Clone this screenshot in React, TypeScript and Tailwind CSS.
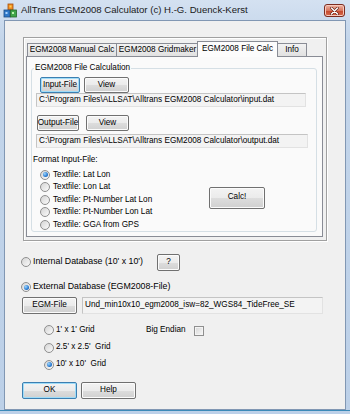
import React from "react";

const btnBase =
  "flex items-center justify-center whitespace-nowrap rounded-[2px] border bg-[linear-gradient(#f3f3f3_0%,#ebebeb_50%,#dddddd_51%,#d0d0d0_100%)] text-[8.2px] leading-none";
const btnNormal = "border-[#707070] shadow-[inset_0_0_0_1px_#fbfbfb]";
const btnFocus = "border-[#3c7fb1] shadow-[inset_0_0_0_1px_#9fdcf8]";

function Btn({
  label,
  className,
  focus,
}: {
  label: string;
  className: string;
  focus?: boolean;
}) {
  return (
    <div className={`${btnBase} ${focus ? btnFocus : btnNormal} ${className}`}>
      {label}
    </div>
  );
}

function Radio({ checked }: { checked?: boolean }) {
  return (
    <div className="flex h-[10px] w-[10px] shrink-0 items-center justify-center rounded-full border border-[#8f8f8f] bg-[linear-gradient(135deg,#d4d4d4,#fbfbfb)]">
      {checked && (
        <div className="h-[5px] w-[5px] rounded-full bg-[radial-gradient(circle_at_35%_35%,#9fd8ff,#2a7ad0_60%,#114f9c)]" />
      )}
    </div>
  );
}

function RadioRow({
  label,
  checked,
  className,
}: {
  label: string;
  checked?: boolean;
  className: string;
}) {
  return (
    <div className={`flex items-center ${className}`}>
      <Radio checked={checked} />
      <span className="ml-[3px] whitespace-nowrap">{label}</span>
    </div>
  );
}

function Field({ text, className }: { text: string; className: string }) {
  return (
    <div
      className={`flex items-center overflow-hidden whitespace-nowrap border border-[#c4c4c4] border-b-[#e2e2e2] border-r-[#e2e2e2] bg-[#f3f3f3] pl-[2px] ${className}`}
    >
      {text}
    </div>
  );
}

function AppIcon() {
  return (
    <svg width="15" height="15" viewBox="0 0 15 15">
      <rect x="5" y="1" width="5" height="6" fill="#f08a24" stroke="#a4520c" strokeWidth="0.8" />
      <rect x="6.5" y="2.5" width="2" height="2" fill="#ffd24a" />
      <rect x="1" y="7" width="6" height="7" fill="#2f78c8" stroke="#1c4b84" strokeWidth="0.8" />
      <rect x="7.5" y="7" width="6" height="7" fill="#3fa64a" stroke="#22672a" strokeWidth="0.8" />
      <rect x="2.5" y="9" width="2" height="2" fill="#a9d3ff" />
      <rect x="9" y="9" width="2" height="2" fill="#b8f0b0" />
    </svg>
  );
}

export default function App() {
  const tabs = [
    { label: "EGM2008 Manual Calc", w: "w-[90px]" },
    { label: "EGM2008 Gridmaker", w: "w-[83px]" },
  ];

  return (
    <div className="flex h-[414px] w-[350px] flex-col overflow-hidden bg-[linear-gradient(#d4e1f1,#c3d5ea_40px,#bcd0e8)] font-['Liberation_Sans',Arial,sans-serif] text-[8.2px] text-black">
      {/* title bar */}
      <div className="flex h-[20px] shrink-0 items-center">
        <div className="ml-[3px] mt-[1px]">
          <AppIcon />
        </div>
        <span className="ml-[3px] mt-[1px] text-[9.6px] text-[#1a1a1a]">
          AllTrans EGM2008 Calculator (c) H.-G. Duenck-Kerst
        </span>
        <div className="ml-auto mr-[5px] mt-[1px] flex h-[13px] w-[21px] items-center justify-center rounded-[3px] border border-[#7b2c20] bg-[linear-gradient(#eeb3a3,#d8775f_50%,#c2472d_51%,#d86a4c)] shadow-[inset_0_0_0_1px_#f6c9bc]">
          <svg width="9" height="8" viewBox="0 0 9 8">
            <path d="M1.5 1 L7.5 7 M7.5 1 L1.5 7" stroke="#5a1a10" strokeWidth="2.6" strokeLinecap="round" />
            <path d="M1.5 1 L7.5 7 M7.5 1 L1.5 7" stroke="#ffffff" strokeWidth="1.5" strokeLinecap="round" />
          </svg>
        </div>
      </div>

      {/* client area */}
      <div className="mx-[4px] flex flex-1 flex-col border border-[#8197b3] bg-[#f0f0f0]">
        {/* frame around tab control */}
        <div className="ml-[18px] mt-[16px] flex h-[204px] w-[304px] flex-col border border-[#a0a0a0] shadow-[1px_1px_0_#ffffff,inset_1px_1px_0_#ffffff]">
          {/* tab strip */}
          <div className="ml-[3px] mt-[3px] flex h-[15px] items-start">
            {tabs.map((t) => (
              <div
                key={t.label}
                className={`mt-[2px] flex h-[13px] items-center justify-center whitespace-nowrap border border-b-0 border-[#898c95] bg-[linear-gradient(#f2f2f2,#e1e1e1)] ${t.w} -mr-px`}
              >
                {t.label}
              </div>
            ))}
            <div className="relative z-10 -mx-px flex h-[16px] w-[81px] items-center justify-center whitespace-nowrap border border-b-0 border-[#898c95] bg-[#fcfcfc]">
              EGM2008 File Calc
            </div>
            <div className="mt-[2px] flex h-[13px] w-[30px] items-center justify-center border border-b-0 border-[#898c95] bg-[linear-gradient(#f2f2f2,#e1e1e1)]">
              Info
            </div>
          </div>

          {/* tab panel */}
          <div className="ml-[2px] flex h-[181px] w-[297px] flex-col border border-[#898c95] bg-[#fafafa]">
            <div className="relative ml-[4px] mt-[11px] flex h-[164px] w-[286px] flex-col rounded-[3px] border border-[#d5dfe5]">
              <span className="absolute left-[2px] top-[-6px] bg-[#fafafa] px-[1px] leading-[10px]">
                EGM2008 File Calculation
              </span>

              <div className="ml-[8px] mt-[8px] flex">
                <Btn label="Input-File" focus className="h-[16px] w-[40px]" />
                <Btn label="View" className="ml-[4px] h-[16px] w-[45px]" />
              </div>
              <Field
                text="C:\Program Files\ALLSAT\Alltrans EGM2008 Calculator\input.dat"
                className="ml-[4px] h-[17px] w-[270px]"
              />

              <div className="ml-[5px] mt-[8px] flex">
                <Btn label="Output-File" className="h-[16px] w-[42px]" />
                <Btn label="View" className="ml-[7px] h-[16px] w-[43px]" />
              </div>
              <Field
                text="C:\Program Files\ALLSAT\Alltrans EGM2008 Calculator\output.dat"
                className="ml-[4px] mt-[3px] h-[16px] w-[272px]"
              />

              <div className="ml-[1px] mt-[7px] h-[10px] leading-[10px]">Format Input-File:</div>

              <div className="mt-[4px] flex">
                <div className="ml-[8px] flex w-[169px] flex-col">
                  <RadioRow label="Textfile: Lat Lon" checked className="h-[12.5px]" />
                  <RadioRow label="Textfile: Lon Lat" className="h-[12.5px]" />
                  <RadioRow label="Textfile: Pt-Number Lat Lon" className="h-[12.5px]" />
                  <RadioRow label="Textfile: Pt-Number Lon Lat" className="h-[12.5px]" />
                  <RadioRow label="Textfile: GGA from GPS" className="h-[12.5px]" />
                </div>
                <Btn label="Calc!" className="mt-[18px] h-[22px] w-[56px]" />
              </div>
            </div>
          </div>
        </div>

        {/* database choice */}
        <div className="ml-[16px] mt-[12px] flex h-[18px] items-center">
          <div className="flex w-[136px] items-center">
            <Radio />
            <span className="ml-[2px] whitespace-nowrap text-[8.8px]">Internal Database (10' x 10')</span>
          </div>
          <Btn label="?" className="h-[17px] w-[23px]" />
        </div>

        <div className="ml-[16px] mt-[10px] flex h-[12px] items-center">
          <Radio checked />
          <span className="ml-[2px] whitespace-nowrap text-[8.8px]">External Database (EGM2008-File)</span>
        </div>

        <div className="ml-[17px] mt-[4px] flex">
          <Btn label="EGM-File" className="h-[17px] w-[55px]" />
          <Field
            text="Und_min10x10_egm2008_isw=82_WGS84_TideFree_SE"
            className="ml-[5px] h-[17px] w-[241px]"
          />
        </div>

        <div className="ml-[39px] mt-[8px] flex flex-col">
          <div className="flex h-[17px] items-center">
            <div className="flex w-[102px] items-center">
              <Radio />
              <span className="ml-[2px] whitespace-nowrap">1' x 1' Grid</span>
            </div>
            <span className="w-[48px] whitespace-nowrap">Big Endian</span>
            <div className="h-[10px] w-[10px] border border-[#8f8f8f] bg-[linear-gradient(135deg,#d6d6d6,#f8f8f8)] shadow-[inset_0_0_0_1px_#f4f4f4]" />
          </div>
          <div className="flex h-[17px] items-center">
            <Radio />
            <span className="ml-[2px] whitespace-nowrap">2.5' x 2.5'&nbsp; Grid</span>
          </div>
          <div className="flex h-[17px] items-center">
            <Radio checked />
            <span className="ml-[2px] whitespace-nowrap">10' x 10'&nbsp; Grid</span>
          </div>
        </div>

        <div className="ml-[17px] mt-[9px] flex">
          <Btn label="OK" focus className="h-[17px] w-[55px]" />
          <Btn label="Help" className="ml-[4px] h-[17px] w-[55px]" />
        </div>
      </div>

      {/* bottom frame */}
      <div className="h-[4px] shrink-0 border-t border-[#3b8ab8] bg-[#bcd0e8]" />
    </div>
  );
}
